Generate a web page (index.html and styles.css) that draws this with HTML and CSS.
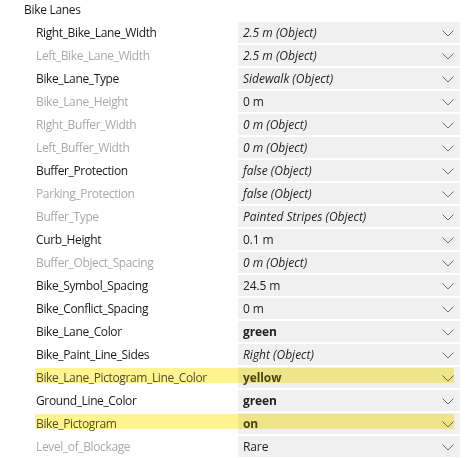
FILE: index.html
```html
<!DOCTYPE html>
<html>
<head>
<meta charset="utf-8">
<link rel="stylesheet" href="styles.css">
</head>
<body>
<div class="panel">
  <div class="header">Bike Lanes</div>
  <div class="rows">
    <div class="row"><div class="label">Right_Bike_Lane_Width</div><div class="value"><span class="v it">2.5 m (Object)</span><svg class="chev" viewBox="0 0 12 7"><polyline points="0.5,0.5 6,6 11.5,0.5"/></svg></div></div>
    <div class="row"><div class="label dim">Left_Bike_Lane_Width</div><div class="value"><span class="v it">2.5 m (Object)</span><svg class="chev" viewBox="0 0 12 7"><polyline points="0.5,0.5 6,6 11.5,0.5"/></svg></div></div>
    <div class="row"><div class="label">Bike_Lane_Type</div><div class="value"><span class="v it">Sidewalk (Object)</span><svg class="chev" viewBox="0 0 12 7"><polyline points="0.5,0.5 6,6 11.5,0.5"/></svg></div></div>
    <div class="row"><div class="label dim">Bike_Lane_Height</div><div class="value"><span class="v">0 m</span><svg class="chev" viewBox="0 0 12 7"><polyline points="0.5,0.5 6,6 11.5,0.5"/></svg></div></div>
    <div class="row"><div class="label dim">Right_Buffer_Width</div><div class="value"><span class="v it">0 m (Object)</span><svg class="chev" viewBox="0 0 12 7"><polyline points="0.5,0.5 6,6 11.5,0.5"/></svg></div></div>
    <div class="row"><div class="label dim">Left_Buffer_Width</div><div class="value"><span class="v it">0 m (Object)</span><svg class="chev" viewBox="0 0 12 7"><polyline points="0.5,0.5 6,6 11.5,0.5"/></svg></div></div>
    <div class="row"><div class="label">Buffer_Protection</div><div class="value"><span class="v it">false (Object)</span><svg class="chev" viewBox="0 0 12 7"><polyline points="0.5,0.5 6,6 11.5,0.5"/></svg></div></div>
    <div class="row"><div class="label dim">Parking_Protection</div><div class="value"><span class="v it">false (Object)</span><svg class="chev" viewBox="0 0 12 7"><polyline points="0.5,0.5 6,6 11.5,0.5"/></svg></div></div>
    <div class="row"><div class="label dim">Buffer_Type</div><div class="value"><span class="v it">Painted Stripes (Object)</span><svg class="chev" viewBox="0 0 12 7"><polyline points="0.5,0.5 6,6 11.5,0.5"/></svg></div></div>
    <div class="row"><div class="label">Curb_Height</div><div class="value"><span class="v">0.1 m</span><svg class="chev" viewBox="0 0 12 7"><polyline points="0.5,0.5 6,6 11.5,0.5"/></svg></div></div>
    <div class="row"><div class="label dim">Buffer_Object_Spacing</div><div class="value"><span class="v it">0 m (Object)</span><svg class="chev" viewBox="0 0 12 7"><polyline points="0.5,0.5 6,6 11.5,0.5"/></svg></div></div>
    <div class="row"><div class="label">Bike_Symbol_Spacing</div><div class="value"><span class="v">24.5 m</span><svg class="chev" viewBox="0 0 12 7"><polyline points="0.5,0.5 6,6 11.5,0.5"/></svg></div></div>
    <div class="row"><div class="label">Bike_Conflict_Spacing</div><div class="value"><span class="v">0 m</span><svg class="chev" viewBox="0 0 12 7"><polyline points="0.5,0.5 6,6 11.5,0.5"/></svg></div></div>
    <div class="row"><div class="label">Bike_Lane_Color</div><div class="value"><span class="v b">green</span><svg class="chev" viewBox="0 0 12 7"><polyline points="0.5,0.5 6,6 11.5,0.5"/></svg></div></div>
    <div class="row"><div class="label">Bike_Paint_Line_Sides</div><div class="value"><span class="v it">Right (Object)</span><svg class="chev" viewBox="0 0 12 7"><polyline points="0.5,0.5 6,6 11.5,0.5"/></svg></div></div>
    <div class="row hl"><div class="label">Bike_Lane_Pictogram_Line_Color</div><div class="value"><span class="v b">yellow</span><svg class="chev" viewBox="0 0 12 7"><polyline points="0.5,0.5 6,6 11.5,0.5"/></svg></div></div>
    <div class="row"><div class="label">Ground_Line_Color</div><div class="value"><span class="v b">green</span><svg class="chev" viewBox="0 0 12 7"><polyline points="0.5,0.5 6,6 11.5,0.5"/></svg></div></div>
    <div class="row hl"><div class="label">Bike_Pictogram</div><div class="value"><span class="v b">on</span><svg class="chev" viewBox="0 0 12 7"><polyline points="0.5,0.5 6,6 11.5,0.5"/></svg></div></div>
    <div class="row"><div class="label dim">Level_of_Blockage</div><div class="value"><span class="v">Rare</span><svg class="chev" viewBox="0 0 12 7"><polyline points="0.5,0.5 6,6 11.5,0.5"/></svg></div></div>
  </div>
</div>
</body>
</html>
```
FILE: styles.css
```css
html, body {
  margin: 0;
  padding: 0;
  background: #ffffff;
}
body {
  font-family: "Open Sans", "Noto Sans", "Liberation Sans", sans-serif;
  font-size: 12px;
  color: #1b1b1b;
  width: 469px;
  height: 458px;
  overflow: hidden;
}
.header {
  height: 20px;
  line-height: 19px;
  padding-left: 24px;
  letter-spacing: -0.3px;
  color: #1b1b1b;
}
.rows {
  display: flex;
  flex-direction: column;
  gap: 2px;
  padding-top: 2px;
}
.row {
  position: relative;
  display: flex;
  height: 21px;
  padding-right: 9px;
}
.label {
  width: 202px;
  padding-left: 36px;
  line-height: 21px;
  letter-spacing: -0.37px;
  white-space: nowrap;
}
.label.dim {
  color: #a9a9a9;
}
.row.hl .label {
  color: #55533a;
}
.value {
  flex: 1;
  display: flex;
  align-items: center;
  justify-content: space-between;
  background: #f0f0f0;
  padding: 0 6px 0 5px;
  color: #1f1f1f;
}
.v {
  line-height: 21px;
  white-space: nowrap;
  letter-spacing: -0.1px;
}
.v.it {
  font-style: italic;
  letter-spacing: 0;
}
.v.b {
  font-weight: 700;
}
.row.hl .v {
  color: #4a4524;
}
.chev {
  width: 12px;
  height: 7px;
  margin-top: 1px;
}
.chev polyline {
  fill: none;
  stroke: #6b6b6b;
  stroke-width: 1;
}
.row.hl::after {
  content: "";
  position: absolute;
  left: 35px;
  right: 15px;
  top: 1px;
  height: 15px;
  background: #fff392;
  mix-blend-mode: multiply;
  pointer-events: none;
}
```
